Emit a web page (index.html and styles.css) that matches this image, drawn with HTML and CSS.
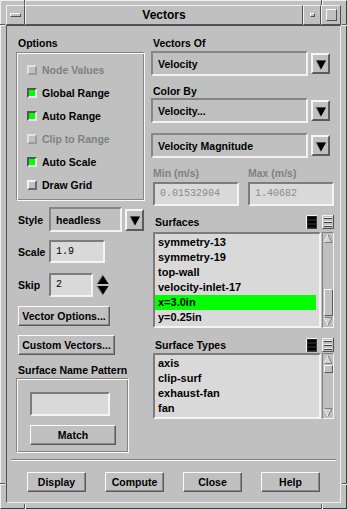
FILE: index.html
```html
<!DOCTYPE html>
<html lang="en">
<head>
<meta charset="utf-8">
<title>Vectors</title>
<link rel="stylesheet" href="styles.css">
</head>
<body>
<div class="frame">
  <span class="notch nv ntl"></span>
  <span class="notch nv ntr"></span>
  <span class="notch nv nbl"></span>
  <span class="notch nv nbr"></span>
  <span class="notch nh nlt"></span>
  <span class="notch nh nrt"></span>
  <span class="notch nh nlb"></span>
  <span class="notch nh nrb"></span>
  <div class="titlebar">
    <div class="tb tb-menu"><span class="menu-bar"></span></div>
    <div class="tb tb-title">Vectors</div>
    <div class="tb tb-min"><span class="min-box"></span></div>
    <div class="tb tb-max"><span class="max-box"></span></div>
  </div>
  <div class="client">
    <div class="main">
      <div class="col col-left">
        <div class="label">Options</div>
        <div class="group options">
          <div class="check disabled"><span class="cb"></span>Node Values</div>
          <div class="check"><span class="cb on"></span>Global Range</div>
          <div class="check"><span class="cb on"></span>Auto Range</div>
          <div class="check disabled"><span class="cb"></span>Clip to Range</div>
          <div class="check"><span class="cb on"></span>Auto Scale</div>
          <div class="check"><span class="cb"></span>Draw Grid</div>
        </div>
        <div class="frow row-style">
          <span class="flabel">Style</span>
          <div class="option opt-style">headless</div>
          <div class="arrowbtn"><svg width="11" height="10" viewBox="0 0 11 10"><polygon points="0,0 11,0 5.5,10" fill="#9a9a9a"/><polygon points="1.5,0.5 11,0.5 6,9.5" fill="#000"/></svg></div>
        </div>
        <div class="frow row-scale">
          <span class="flabel">Scale</span>
          <div class="field field-scale">1.9</div>
        </div>
        <div class="frow row-skip">
          <span class="flabel">Skip</span>
          <div class="field field-skip">2</div>
          <svg class="spinner" width="13" height="22" viewBox="0 0 13 22">
            <polygon points="6.5,0 13,10 0,10" fill="#9a9a9a"/>
            <polygon points="7,1.5 12.5,10 1.5,10" fill="#000"/>
            <polygon points="0,12 13,12 6.5,22" fill="#9a9a9a"/>
            <polygon points="1.5,12 12.5,12 7,20.5" fill="#000"/>
          </svg>
        </div>
        <div class="btn btn-vecopt">Vector Options...</div>
        <div class="btn btn-custom">Custom Vectors...</div>
        <div class="label label-pattern">Surface Name Pattern</div>
        <div class="group pattern">
          <div class="field field-pattern"></div>
          <div class="btn btn-match">Match</div>
        </div>
      </div>
      <div class="col col-right">
        <div class="label">Vectors Of</div>
        <div class="drow drow-first">
          <div class="option opt-wide">Velocity</div>
          <div class="arrowbtn sm"><svg width="11" height="10" viewBox="0 0 11 10"><polygon points="0,0 11,0 5.5,10" fill="#9a9a9a"/><polygon points="1.5,0.5 11,0.5 6,9.5" fill="#000"/></svg></div>
        </div>
        <div class="label label-colorby">Color By</div>
        <div class="drow">
          <div class="option opt-wide">Velocity...</div>
          <div class="arrowbtn sm"><svg width="11" height="10" viewBox="0 0 11 10"><polygon points="0,0 11,0 5.5,10" fill="#9a9a9a"/><polygon points="1.5,0.5 11,0.5 6,9.5" fill="#000"/></svg></div>
        </div>
        <div class="drow drow-mag">
          <div class="option opt-wide">Velocity Magnitude</div>
          <div class="arrowbtn sm"><svg width="11" height="10" viewBox="0 0 11 10"><polygon points="0,0 11,0 5.5,10" fill="#9a9a9a"/><polygon points="1.5,0.5 11,0.5 6,9.5" fill="#000"/></svg></div>
        </div>
        <div class="mm-labels"><span>Min (m/s)</span><span>Max (m/s)</span></div>
        <div class="mm-fields">
          <div class="field field-mm">0.01532904</div>
          <div class="field field-mm">1.40682</div>
        </div>
        <div class="lhead">
          <div class="label">Surfaces</div>
          <svg class="icon-all" width="11" height="14" viewBox="0 0 11 14">
            <rect width="11" height="14" fill="#3a3a3a"/>
            <path d="M0.5 14V0.5H11" stroke="#f4f4f4" fill="none"/>
            <rect x="1.5" y="1.5" width="8.5" height="3" fill="#000"/>
            <rect x="1.5" y="5.5" width="8.5" height="3" fill="#000"/>
            <rect x="1.5" y="9.5" width="8.5" height="3" fill="#000"/>
          </svg>
          <svg class="icon-none" width="12" height="14" viewBox="0 0 12 14">
            <rect width="12" height="14" fill="#c0c0c0"/>
            <path d="M0.5 14V0.5H12" stroke="#f4f4f4" fill="none"/>
            <path d="M0.5 13.5H11.5V0" stroke="#505050" fill="none"/>
            <path d="M2 3.5H10M2 7.5H10M2 11.5H10" stroke="#404040" fill="none"/>
            <path d="M2 2.5H10M2 6.5H10M2 10.5H10" stroke="#ececec" fill="none"/>
          </svg>
        </div>
        <div class="lwrap lwrap-surf">
          <div class="list">
            <div class="item">symmetry-13</div>
            <div class="item">symmetry-19</div>
            <div class="item">top-wall</div>
            <div class="item">velocity-inlet-17</div>
            <div class="item sel">x=3.0in</div>
            <div class="item">y=0.25in</div>
          </div>
          <div class="sbar">
            <svg class="sarrow" width="10" height="11" viewBox="0 0 10 11"><polygon points="5,1.5 9,9.5 1,9.5" fill="#d0d0d0" stroke="#808080"/><path d="M1 9.5L5 1.5" stroke="#fff"/></svg>
            <div class="track end"><div class="thumb thumb-surf"></div></div>
            <svg class="sarrow" width="10" height="11" viewBox="0 0 10 11"><polygon points="1,1.5 9,1.5 5,9.5" fill="#d0d0d0" stroke="#808080"/><path d="M1 1.5L5 9.5" stroke="#fff"/></svg>
          </div>
        </div>
        <div class="lhead lhead-types">
          <div class="label">Surface Types</div>
          <svg class="icon-all" width="11" height="14" viewBox="0 0 11 14">
            <rect width="11" height="14" fill="#3a3a3a"/>
            <path d="M0.5 14V0.5H11" stroke="#f4f4f4" fill="none"/>
            <rect x="1.5" y="1.5" width="8.5" height="3" fill="#000"/>
            <rect x="1.5" y="5.5" width="8.5" height="3" fill="#000"/>
            <rect x="1.5" y="9.5" width="8.5" height="3" fill="#000"/>
          </svg>
          <svg class="icon-none" width="12" height="14" viewBox="0 0 12 14">
            <rect width="12" height="14" fill="#c0c0c0"/>
            <path d="M0.5 14V0.5H12" stroke="#f4f4f4" fill="none"/>
            <path d="M0.5 13.5H11.5V0" stroke="#505050" fill="none"/>
            <path d="M2 3.5H10M2 7.5H10M2 11.5H10" stroke="#404040" fill="none"/>
            <path d="M2 2.5H10M2 6.5H10M2 10.5H10" stroke="#ececec" fill="none"/>
          </svg>
        </div>
        <div class="lwrap lwrap-types">
          <div class="list">
            <div class="item">axis</div>
            <div class="item">clip-surf</div>
            <div class="item">exhaust-fan</div>
            <div class="item">fan</div>
          </div>
          <div class="sbar">
            <svg class="sarrow" width="10" height="11" viewBox="0 0 10 11"><polygon points="5,1.5 9,9.5 1,9.5" fill="#d0d0d0" stroke="#808080"/><path d="M1 9.5L5 1.5" stroke="#fff"/></svg>
            <div class="track"><div class="thumb thumb-types"></div></div>
            <svg class="sarrow" width="10" height="11" viewBox="0 0 10 11"><polygon points="1,1.5 9,1.5 5,9.5" fill="#d0d0d0" stroke="#808080"/><path d="M1 1.5L5 9.5" stroke="#fff"/></svg>
          </div>
        </div>
      </div>
    </div>
    <div class="sep"></div>
    <div class="actions">
      <div class="btn">Display</div>
      <div class="btn">Compute</div>
      <div class="btn">Close</div>
      <div class="btn">Help</div>
    </div>
  </div>
</div>
</body>
</html>
```

FILE: styles.css
```css
* { box-sizing: border-box; margin: 0; padding: 0; }
html, body { width: 347px; height: 509px; overflow: hidden; background: #c0c0c0; }
body {
  font-family: "Liberation Sans", Arial, sans-serif;
  font-weight: bold;
  font-size: 10.5px;
  line-height: 14px;
  color: #000;
}

.frame {
  position: relative;
  width: 347px;
  height: 509px;
  background: #c0c0c0;
  border: 1px solid;
  border-color: #f0f0f0 #3c3c3c #3c3c3c #f0f0f0;
  padding: 4px 5px 5px;
  display: flex;
  flex-direction: column;
}
.notch { position: absolute; }
.nv { width: 2px; height: 5px; background: linear-gradient(to right, #5a5a5a 50%, #f0f0f0 50%); }
.nh { width: 5px; height: 2px; background: linear-gradient(#5a5a5a 50%, #f0f0f0 50%); }
.ntl { left: 23px; top: -1px; }
.ntr { left: 320px; top: -1px; }
.nbl { left: 23px; bottom: -1px; }
.nbr { left: 320px; bottom: -1px; }
.nlt { left: -1px; top: 23px; }
.nrt { right: -1px; top: 23px; }
.nlb { left: -1px; bottom: 23px; }
.nrb { right: -1px; bottom: 23px; }

.titlebar { display: flex; height: 20px; flex: none; }
.tb {
  border: 1px solid;
  border-color: #f0f0f0 #505050 #505050 #f0f0f0;
  display: flex;
  align-items: center;
  justify-content: center;
}
.tb-menu { width: 19px; }
.tb-title { flex: 1; font-size: 12px; }
.tb-min { width: 18px; }
.tb-max { width: 20px; }
.menu-bar { width: 11px; height: 4px; border: 1px solid; border-color: #fafafa #505050 #505050 #fafafa; }
.min-box { width: 5px; height: 4px; border: 1px solid; border-color: #fafafa #505050 #505050 #fafafa; }
.max-box { width: 11px; height: 12px; border: 1px solid; border-color: #fafafa #505050 #505050 #fafafa; }

.client {
  flex: 1;
  border: 1px solid;
  border-color: #505050 #f0f0f0 #f0f0f0 #505050;
  display: flex;
  flex-direction: column;
}
.main { display: flex; gap: 6px; padding: 10px 6px 0 9px; }
.col { display: flex; flex-direction: column; align-items: flex-start; }
.col-left { width: 129px; }
.col-right { width: 183px; }

.label { height: 14px; line-height: 14px; white-space: nowrap; padding-left: 2px; }

.group {
  border: 1px solid;
  border-color: #858585 #fafafa #fafafa #858585;
  box-shadow: inset 1px 1px #fafafa, inset -1px -1px #858585;
}
.options { margin-top: 2px; width: 129px; height: 149px; padding: 5px 0 0 10px; }
.check { height: 23px; display: flex; align-items: center; white-space: nowrap; }
.check.disabled { color: #808080; }
.cb {
  flex: none;
  width: 10px;
  height: 10px;
  margin-right: 5px;
  border: 2px solid;
  border-color: #f4f4f4 #6a6a6a #6a6a6a #f4f4f4;
  background: #c0c0c0;
}
.check.disabled .cb { border-color: #e2e2e2 #9c9c9c #9c9c9c #e2e2e2; }
.cb.on { border-color: #555 #e6e6e6 #e6e6e6 #555; background: #00ff00; }

.frow { display: flex; align-items: center; width: 100%; }
.flabel { flex: none; width: 33px; padding-left: 2px; }
.row-style { margin-top: 6px; height: 25px; }
.row-scale { margin-top: 8px; height: 23px; }
.row-skip { margin-top: 10px; height: 24px; }

.option {
  flex: none;
  height: 25px;
  border: 2px solid;
  border-color: #868686 #f2f2f2 #f2f2f2 #868686;
  padding-left: 5px;
  display: flex;
  align-items: center;
  white-space: nowrap;
}
.opt-style { width: 73px; }
.opt-wide { width: 157px; }
.arrowbtn {
  flex: none;
  width: 19px;
  height: 22px;
  margin-left: 3px;
  border: 2px solid;
  border-color: #f6f6f6 #5c5c5c #5c5c5c #f6f6f6;
  display: flex;
  align-items: center;
  justify-content: center;
  padding-top: 2px;
}
.arrowbtn.sm { height: 21px; }

.field {
  flex: none;
  background: #d9d9d9;
  border: 2px solid;
  border-color: #7c7c7c #f4f4f4 #f4f4f4 #7c7c7c;
  font-family: "Liberation Mono", monospace;
  font-weight: normal;
  font-size: 10px;
  padding-left: 5px;
  display: flex;
  align-items: center;
}
.field-scale { width: 56px; height: 23px; }
.field-skip { width: 44px; height: 24px; }
.spinner { flex: none; margin-left: 3px; }

.btn {
  flex: none;
  height: 20px;
  border: 1px solid;
  border-color: #fafafa #5a5a5a #5a5a5a #fafafa;
  box-shadow: inset -1px -1px #8a8a8a;
  display: flex;
  align-items: center;
  justify-content: center;
  white-space: nowrap;
}
.btn-vecopt { margin: 9px 0 0 2px; width: 92px; }
.btn-custom { margin: 9px 0 0 2px; width: 97px; }
.label-pattern { margin-top: 8px; }
.pattern {
  margin-top: 1px;
  width: 113px;
  height: 75px;
  padding: 13px 0 0 13px;
  display: flex;
  flex-direction: column;
  align-items: flex-start;
}
.field-pattern { width: 80px; height: 24px; }
.btn-match { margin-top: 9px; width: 86px; }

.drow { display: flex; align-items: center; height: 25px; }
.drow-first { margin-top: 1px; }
.label-colorby { margin-top: 8px; }
.drow-mag { margin-top: 10px; }

.mm-labels { margin-top: 8px; height: 14px; display: flex; gap: 9px; padding-left: 2px; color: #808080; }
.mm-labels span { width: 86px; }
.mm-fields { margin-top: 2px; display: flex; gap: 9px; padding-left: 2px; }
.field-mm { width: 86px; height: 24px; color: #8c8c8c; }

.lhead { width: 100%; height: 15px; margin-top: 8px; display: flex; align-items: center; }
.lhead-types { margin-top: 9px; }
.lhead .label { flex: 1; padding-left: 4px; }
.icon-all { margin-right: 5px; flex: none; }
.icon-none { flex: none; }

.lwrap { display: flex; margin-left: 2px; margin-top: 3px; }
.lwrap-surf { height: 96px; }
.lwrap-types { height: 66px; margin-top: 1px; }
.list {
  width: 168px;
  background: #d9d9d9;
  border: 2px solid;
  border-color: #7c7c7c #f4f4f4 #f4f4f4 #7c7c7c;
  padding: 1px 3px 0 0;
  font-size: 11px;
  overflow: hidden;
}
.item { height: 15px; line-height: 15px; padding-left: 3px; white-space: nowrap; }
.item.sel { background: #00ff00; }

.sbar {
  width: 12px;
  margin-left: 1px;
  border: 1px solid;
  border-color: #808080 #f4f4f4 #f4f4f4 #808080;
  background: #c0c0c0;
  display: flex;
  flex-direction: column;
  align-items: center;
}
.sarrow { flex: none; }
.track { flex: 1; width: 100%; display: flex; flex-direction: column; align-items: center; }
.track.end { justify-content: flex-end; }
.thumb { width: 9px; border: 1px solid; border-color: #f4f4f4 #5a5a5a #5a5a5a #f4f4f4; }
.thumb-surf { height: 27px; }
.thumb-types { height: 8px; }

.sep {
  flex: none;
  margin: 6px 4px 0;
  height: 2px;
  border-top: 1px solid #808080;
  border-bottom: 1px solid #fafafa;
}
.actions { display: flex; justify-content: center; gap: 19px; margin-top: 11px; }
.actions .btn { width: 59px; }
```
